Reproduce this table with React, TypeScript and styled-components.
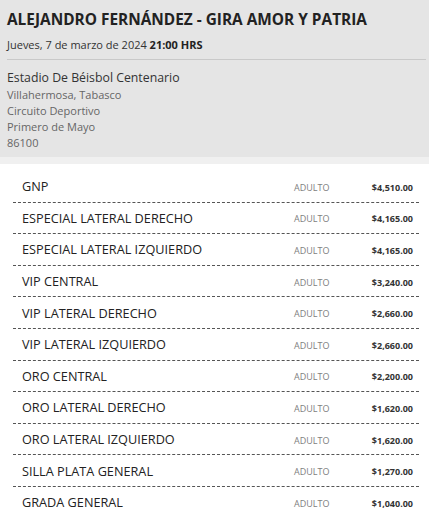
import React from "react";
import styled, { createGlobalStyle } from "styled-components";

const GlobalStyle = createGlobalStyle`
  body {
    margin: 0;
    background: #ffffff;
    font-family: "Open Sans", "Noto Sans", sans-serif;
    overflow: hidden;
  }
`;

const Page = styled.div`
  width: 429px;
  display: flex;
  flex-direction: column;
`;

const Header = styled.div`
  background: #e5e5e5;
  padding: 9px 3px 6px 7px;
`;

const Title = styled.h1`
  margin: 0;
  font-size: 15.4px;
  line-height: 22px;
  font-weight: 700;
  color: #222222;
`;

const DateLine = styled.div`
  margin-top: 6px;
  font-size: 11px;
  line-height: 16px;
  color: #333333;

  b {
    font-weight: 700;
    color: #222222;
  }
`;

const Rule = styled.hr`
  margin: 6px 0 0;
  border: 0;
  border-top: 1px solid #c9c9c9;
`;

const Venue = styled.div`
  margin-top: 9px;
  font-size: 12.3px;
  line-height: 18px;
  color: #333333;
`;

const Address = styled.div`
  font-size: 11px;
  line-height: 16px;
  color: #666666;
`;

const Strip = styled.div`
  height: 7px;
  background: #f0f0f0;
`;

const List = styled.div`
  padding: 7px 10px 0 13px;
`;

const Row = styled.div<{ $last?: boolean }>`
  display: grid;
  grid-template-columns: 1fr 76px 43px;
  align-items: center;
  height: 30.6px;
  padding: 0 6px 0 9px;
  border-bottom: ${(p) => (p.$last ? "none" : "1px dashed #555555")};
`;

const Zone = styled.span`
  font-size: 12.7px;
  color: #222222;
`;

const Kind = styled.span`
  font-size: 9px;
  color: #808080;
  padding-top: 2px;
`;

const Price = styled.span`
  font-size: 9px;
  font-weight: 700;
  color: #333333;
  text-align: right;
  padding-top: 2px;
`;

const Footnote = styled.div`
  margin-top: 5px;
  padding-left: 270px;
  font-size: 14px;
  color: #bbbbbb;
  white-space: nowrap;
`;

const zones: [string, string][] = [
  ["GNP", "$4,510.00"],
  ["ESPECIAL LATERAL DERECHO", "$4,165.00"],
  ["ESPECIAL LATERAL IZQUIERDO", "$4,165.00"],
  ["VIP CENTRAL", "$3,240.00"],
  ["VIP LATERAL DERECHO", "$2,660.00"],
  ["VIP LATERAL IZQUIERDO", "$2,660.00"],
  ["ORO CENTRAL", "$2,200.00"],
  ["ORO LATERAL DERECHO", "$1,620.00"],
  ["ORO LATERAL IZQUIERDO", "$1,620.00"],
  ["SILLA PLATA GENERAL", "$1,270.00"],
  ["GRADA GENERAL", "$1,040.00"],
];

const App = () => {
  return (
    <Page>
      <GlobalStyle />
      <Header>
        <Title>ALEJANDRO FERNÁNDEZ - GIRA AMOR Y PATRIA</Title>
        <DateLine>
          Jueves, 7 de marzo de 2024 <b>21:00 HRS</b>
        </DateLine>
        <Rule />
        <Venue>Estadio De Béisbol Centenario</Venue>
        <Address>Villahermosa, Tabasco</Address>
        <Address>Circuito Deportivo</Address>
        <Address>Primero de Mayo</Address>
        <Address>86100</Address>
      </Header>
      <Strip />
      <List>
        {zones.map(([name, price], i) => (
          <Row key={name} $last={i === zones.length - 1}>
            <Zone>{name}</Zone>
            <Kind>ADULTO</Kind>
            <Price>{price}</Price>
          </Row>
        ))}
      </List>
      <Footnote>Asientos y Mirador</Footnote>
    </Page>
  );
};

export default App;
